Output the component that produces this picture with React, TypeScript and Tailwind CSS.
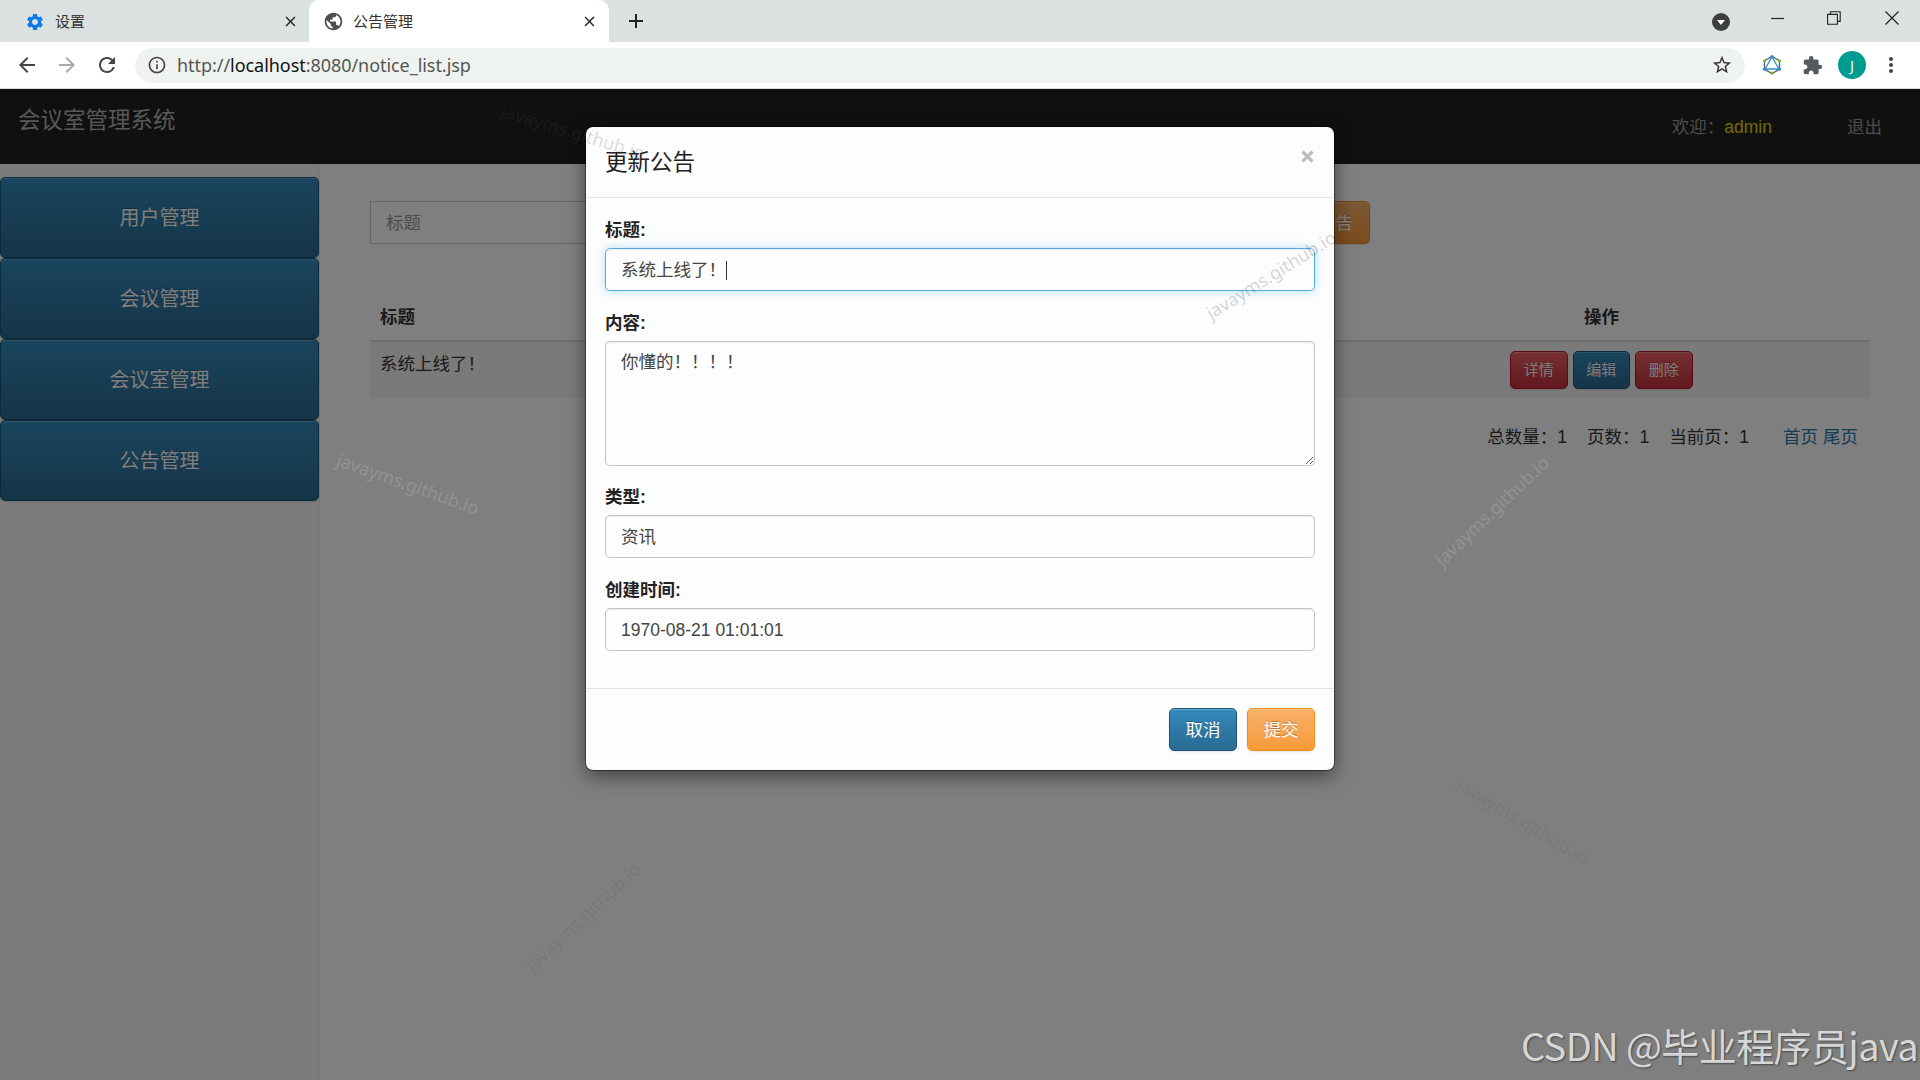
import type { ReactNode } from "react";
import { MdSettings, MdPublic, MdClose, MdAdd, MdArrowBack, MdArrowForward, MdRefresh, MdInfoOutline, MdStarBorder, MdExtension, MdMoreVert } from "react-icons/md";

const MENU = ["用户管理", "会议管理", "会议室管理", "公告管理"];

// tiled site marks that float over the page
const MARKS = [
  { x: 573, y: 132, deg: 17, color: "text-[#484848]/20" },
  { x: 408, y: 484, deg: 19.5, color: "text-white/14" },
  { x: 1271, y: 275, deg: -32, color: "text-black/18" },
  { x: 1492, y: 511, deg: -43.5, color: "text-white/14" },
  { x: 1523, y: 821, deg: 31.5, color: "text-black/7" },
  { x: 583, y: 917, deg: -43, color: "text-black/7" },
];

const BLUE = "border-[#1a5478] bg-linear-to-b from-[#348abd] to-[#2a6a92]";
const RED = "border-[#b01c28] bg-linear-to-b from-[#ee5f66] to-[#c42f3b]";
const ORANGE = "border-[#ee8d1c] bg-linear-to-b from-[#f8b167] to-[#f79a36]";

interface ButtonProps {
  tone: string;
  size: string;
  children: ReactNode;
}

function Button({ tone, size, children }: ButtonProps) {
  return (
    <button
      className={`flex items-center justify-center rounded-[5px] border text-white [text-shadow:0_-1px_0_rgba(0,0,0,0.25)] shadow-[inset_0_1px_0_rgba(255,255,255,0.25),0_1px_2px_rgba(0,0,0,0.1)] ${tone} ${size}`}
    >
      {children}
    </button>
  );
}

function BrowserChrome() {
  return (
    <div className="h-[89px] shrink-0 border-b border-[#d8dad9] bg-white font-['Noto_Sans','Noto_Sans_CJK_SC',sans-serif]">
      {/* Tab strip */}
      <div className="flex h-[42px] bg-[#dbe1e1] text-[15px] text-[#333]">
        <div className="flex w-[309px] items-center pt-px pl-[25px]">
          <MdSettings className="size-5 text-[#0b7bea]" />
          <span className="ml-2.5">设置</span>
          <MdClose className="mr-[10px] ml-auto size-[17px] text-[#222]" />
        </div>
        <div className="flex w-[300px] items-center rounded-t-[10px] bg-white pt-px pl-[14px]">
          <MdPublic className="size-[21px] text-[#4b4f52]" />
          <span className="ml-[9px]">公告管理</span>
          <MdClose className="mr-[11px] ml-auto size-[17px] text-[#222]" />
        </div>
        <MdAdd className="mt-[9px] ml-[15px] size-6 text-[#222]" />
        <div className="ml-auto flex items-center">
          <svg className="mt-px size-[18px]" viewBox="0 0 18 18">
            <circle cx="9" cy="9" r="9" fill="#3b3f3f" />
            <path d="M5 7h8l-4 5z" fill="#fff" />
          </svg>
          <svg className="-mt-1.5 ml-[41px] h-[14px] w-[13px]" viewBox="0 0 13 14">
            <path d="M0 7.5h13" stroke="#222" strokeWidth="1.2" />
          </svg>
          <svg className="-mt-1.5 ml-[43px] size-[14px]" viewBox="0 0 14 14" fill="none" stroke="#222" strokeWidth="1.1">
            <path d="M.6 3.4h9.8v9.8H.6zM3.4 3.4V.7h9.8v9.7h-2.8" />
          </svg>
          <svg className="-mt-1.5 mr-[21px] ml-[44px] size-[14px]" viewBox="0 0 14 14" stroke="#222" strokeWidth="1.2">
            <path d="M.5.5l13 13M13.500.5l-13 13" />
          </svg>
        </div>
      </div>

      {/* Toolbar */}
      <div className="flex h-[46px] items-center pr-[16px] pl-[15px]">
        <MdArrowBack className="size-6 text-[#444]" />
        <MdArrowForward className="ml-4 size-6 text-[#aaa]" />
        <MdRefresh className="ml-4 size-6 text-[#444]" />
        <div className="ml-4 flex h-[35px] w-[1610px] items-center rounded-full bg-[#eff3ef] pr-[12px] pl-3">
          <MdInfoOutline className="size-5 text-[#444]" />
          <span className="ml-[10px] text-[18px] tracking-[-0.05px] whitespace-nowrap text-[#555]">
            http://<span className="text-[#111]">localhost</span>:8080/notice_list.jsp
          </span>
          <MdStarBorder className="ml-auto size-[22px] text-[#333]" />
        </div>
        <svg className="ml-[17px] size-5" viewBox="0 0 20 20" fill="none">
          <path d="M10 1.500l7.500 4.300v8.500L10 18.500l-7.500-4.200V5.800z" stroke="#556" strokeWidth="1.300" />
          <path d="M10 2l7 12H3z" stroke="#2b8fd0" strokeWidth="1.300" />
          <g fill="#78be20">
            <circle cx="2.500" cy="5.800" r="1.600" />
            <circle cx="17.500" cy="5.800" r="1.600" />
            <circle cx="10" cy="18.200" r="1.600" />
          </g>
          <g fill="#2b8fd0">
            <circle cx="10" cy="1.800" r="1.700" />
            <circle cx="2.500" cy="14.200" r="1.600" />
            <circle cx="17.500" cy="14.200" r="1.600" />
          </g>
        </svg>
        <MdExtension className="ml-5 size-[21px] text-[#555a5e]" />
        <span className="ml-[15px] flex size-7 items-center justify-center rounded-full bg-[#009b90] font-['Open_Sans',sans-serif] text-[15px] text-white">J</span>
        <MdMoreVert className="ml-[13px] size-6 text-[#444]" />
      </div>
    </div>
  );
}

function NoticePage() {
  return (
    <div className="flex h-full flex-col bg-white text-[17.5px] text-[#333]">
      <header className="flex h-[75px] shrink-0 bg-[#202020] text-[#999]">
        <h1 className="mt-[16px] ml-[18px] text-[22.5px] leading-8 text-[#b0b0b0]">会议室管理系统</h1>
        <div className="mt-[25px] mr-[38px] ml-auto flex leading-[26px]">
          <span>欢迎：</span>
          <span className="text-[#e0d800]">admin</span>
          <span className="ml-[75px]">退出</span>
        </div>
      </header>

      <div className="flex min-h-0 flex-1">
        <nav className="flex w-[320px] flex-col border-r border-[#eee] bg-[#f8f8f8] pt-[13px]">
          {MENU.map((item) => (
            <Button key={item} tone={BLUE} size="h-[81px] w-[319px] text-[20px]">
              {item}
            </Button>
          ))}
        </nav>

        <main className="flex-1 pt-[37px] pr-[50px] pl-[50px]">
          <div className="flex h-[43px] w-[1000px] justify-between">
            <input
              className="w-[280px] border border-[#ccc] px-[15px] pt-0.5 placeholder-[#999]"
              placeholder="标题"
            />
            <Button tone={ORANGE} size="w-[104px] pt-px">添加公告</Button>
          </div>

          <table className="mt-[43px] w-[1500px] table-fixed">
            <thead>
              <tr className="h-[54px] border-b-2 border-[#ddd] font-bold">
                <th className="w-[1040px] px-2.5 pt-2 text-left">标题</th>
                <th className="pr-[77px] pt-2">操作</th>
              </tr>
            </thead>
            <tbody>
              <tr className="h-[57px] bg-[#f5f5f5]">
                <td className="px-2.5 pt-[9px] align-top">系统上线了！</td>
                <td className="pt-[9px] pl-[100px] align-top">
                  <div className="flex gap-[5px] text-[15px]">
                    <Button tone={RED} size="h-[38px] w-[57.500px]">详情</Button>
                    <Button tone={BLUE} size="h-[38px] w-[57.500px]">编辑</Button>
                    <Button tone={RED} size="h-[38px] w-[57.500px]">删除</Button>
                  </div>
                </td>
              </tr>
            </tbody>
          </table>

          <div className="mt-[26px] flex justify-end pr-[12px] leading-[26px]">
            <span className="mr-5">总数量：1</span>
            <span className="mr-5">页数：1</span>
            <span className="mr-[34px]">当前页：1</span>
            <span className="mr-[5px] text-[#2a78a8]">首页</span>
            <span className="text-[#2a78a8]">尾页</span>
          </div>
        </main>
      </div>
    </div>
  );
}

function Field({ label, children }: { label: string; children: ReactNode }) {
  return (
    <div className="mb-[18.500px]">
      <div className="mb-[5px] h-[26px] pt-px leading-[25px] font-bold text-[#222]">{label}</div>
      {children}
    </div>
  );
}

const CONTROL = "flex w-full items-center rounded-[5px] border px-[15px] text-[#444]";

function NoticeModal() {
  return (
    <div className="absolute top-[38px] left-[586px] flex h-[643px] w-[748px] flex-col rounded-[7px] bg-[#fdfdfd] text-[17.5px] shadow-[0_0_0_1px_rgba(0,0,0,0.4),0_6px_19px_rgba(0,0,0,0.5)]">
      <div className="flex h-[71px] shrink-0 justify-between border-b border-[#e5e5e5] pt-[19px] pr-[20px] pl-[19px]">
        <h2 className="mt-px text-[22.5px] leading-8 text-[#222]">更新公告</h2>
        <svg className="mt-[4px] size-[13px]" viewBox="0 0 13 13" stroke="#bfbfbf" strokeWidth="3.2">
          <path d="M1.500 1.500l10 10M11.500 1.500l-10 10" />
        </svg>
      </div>

      <div className="flex-1 px-[19px] pt-[19px]">
        <Field label="标题:">
          <div className={`${CONTROL} h-[43px] border-[#55b0dc] pt-0.5 shadow-[inset_0_1px_1px_rgba(0,0,0,0.08),0_0_10px_rgba(102,190,233,0.5)]`}>
            系统上线了！<span className="h-[19px] w-px bg-[#333]" />
          </div>
        </Field>
        <Field label="内容:">
          <textarea
            className={`${CONTROL} block h-[125px] resize border-[#c4c4c4] pt-[8px] leading-[25px] shadow-[inset_0_1px_1px_rgba(0,0,0,0.08)]`}
            defaultValue="你懂的！！！！"
          />
        </Field>
        <Field label="类型:">
          <div className={`${CONTROL} h-[43px] border-[#c4c4c4] pt-0.5 shadow-[inset_0_1px_1px_rgba(0,0,0,0.08)]`}>资讯</div>
        </Field>
        <Field label="创建时间:">
          <div className={`${CONTROL} h-[43px] border-[#c4c4c4] pt-0.5 shadow-[inset_0_1px_1px_rgba(0,0,0,0.08)]`}>
            1970-08-21 01:01:01
          </div>
        </Field>
      </div>

      <div className="flex h-[82px] shrink-0 justify-end gap-2.5 border-t border-[#e5e5e5] pt-[19px] pr-[19px]">
        <Button tone={BLUE} size="h-[43px] w-[68px] pt-0.5">取消</Button>
        <Button tone={ORANGE} size="h-[43px] w-[68px] pt-0.5">提交</Button>
      </div>
    </div>
  );
}

export default function App() {
  return (
    <div className="relative flex h-[1080px] w-[1920px] flex-col overflow-hidden font-['Liberation_Sans','Noto_Sans_CJK_SC',sans-serif]">
      <BrowserChrome />
      <div className="relative min-h-0 flex-1">
        <NoticePage />
        <div className="absolute inset-0 bg-black/50" />
        <NoticeModal />
      </div>

      {MARKS.map((m) => (
        <span
          key={`${m.x}-${m.y}`}
          className={`pointer-events-none absolute font-['Noto_Sans',sans-serif] text-[18px] whitespace-nowrap ${m.color}`}
          style={{ left: m.x, top: m.y, transform: `translate(-50%, -50%) rotate(${m.deg}deg)` }}
        >
          javayms.github.io
        </span>
      ))}
      <div className="absolute top-[1017px] left-[1521px] text-[38px] leading-[56px] tracking-[-0.6px] whitespace-nowrap text-[#d6d6d6] [text-shadow:1px_1px_2px_rgba(0,0,0,0.45)] font-['Noto_Sans_CJK_SC',sans-serif]">
        CSDN @毕业程序员java
      </div>
    </div>
  );
}
